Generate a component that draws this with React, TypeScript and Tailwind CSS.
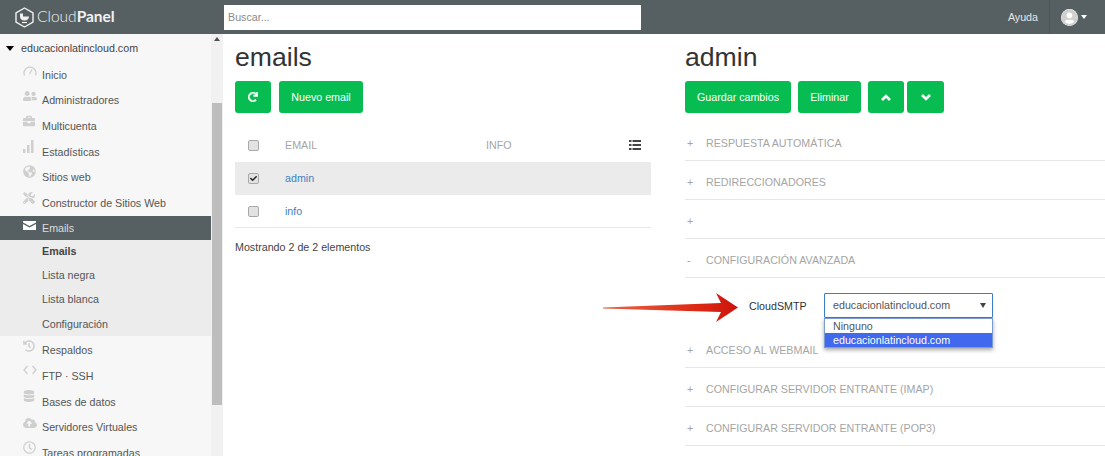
import type { ReactNode } from 'react';
import { FaUserFriends, FaBriefcase, FaGlobeAmericas, FaTools, FaHistory, FaDatabase, FaCloudUploadAlt, FaRegClock, FaRedo, FaUserCircle, FaCheck } from 'react-icons/fa';

function GaugeIcon() {
  return (
    <svg width="14" height="10" viewBox="0 0 14 10" fill="none" stroke="currentColor" strokeWidth="1.3">
      <path d="M1.5 9.5 A6 6 0 1 1 12.5 9.5" />
      <path d="M6.5 8 L9 3.5" />
    </svg>
  );
}

function BarsIcon() {
  return (
    <svg width="11" height="13" viewBox="0 0 11 13" fill="currentColor">
      <rect x="0" y="9" width="2.5" height="4" />
      <rect x="4" y="5" width="2.5" height="8" />
      <rect x="8" y="0" width="2.5" height="13" />
    </svg>
  );
}

function CodeIcon() {
  return (
    <svg width="14" height="10" viewBox="0 0 14 10" fill="none" stroke="currentColor" strokeWidth="1.3">
      <path d="M4.5 1 L1 5 L4.5 9" />
      <path d="M9.5 1 L13 5 L9.5 9" />
    </svg>
  );
}

function MailIcon() {
  return (
    <svg width="13" height="9" viewBox="0 0 13 9" fill="#fff">
      <path d="M0 0 H13 V1.5 L6.5 5 L0 1.5 Z" />
      <path d="M0 3 L6.5 6.5 L13 3 V9 H0 Z" />
    </svg>
  );
}

function ListIcon() {
  return (
    <svg width="12" height="12" viewBox="0 0 12 12" fill="#444">
      <rect x="0" y="1" width="2.5" height="2" />
      <rect x="3.5" y="1" width="8.5" height="2" />
      <rect x="0" y="5" width="2.5" height="2" />
      <rect x="3.5" y="5" width="8.5" height="2" />
      <rect x="0" y="9" width="2.5" height="2" />
      <rect x="3.5" y="9" width="8.5" height="2" />
    </svg>
  );
}

function Chevron({ up }: { up?: boolean }) {
  return (
    <svg width="10" height="7" viewBox="0 0 10 7" fill="none" stroke="#fff" strokeWidth="2.6">
      <path d={up ? 'M1 6 L5 2 L9 6' : 'M1 1 L5 5 L9 1'} />
    </svg>
  );
}

const menuTop = [
  { label: 'Inicio', icon: <GaugeIcon />, top: 'top-[4px]' },
  { label: 'Administradores', icon: <FaUserFriends className="text-[14px]" />, top: 'top-[1px]' },
  { label: 'Multicuenta', icon: <FaBriefcase className="text-[12px]" />, top: 'top-[2px]' },
  { label: 'Estadísticas', icon: <BarsIcon />, top: 'top-[1px]' },
  { label: 'Sitios web', icon: <FaGlobeAmericas className="text-[13px]" />, top: 'top-[1px]' },
  { label: 'Constructor de Sitios Web', icon: <FaTools className="text-[12px]" />, top: 'top-[2px]' },
];

const menuBottom = [
  { label: 'Respaldos', icon: <FaHistory className="text-[12px]" />, top: 'top-[2px]' },
  { label: 'FTP · SSH', icon: <CodeIcon />, top: 'top-[2px]' },
  { label: 'Bases de datos', icon: <FaDatabase className="text-[12px]" />, top: 'top-[1px]' },
  { label: 'Servidores Virtuales', icon: <FaCloudUploadAlt className="text-[14px]" />, top: 'top-[2px]' },
  { label: 'Tareas programadas', icon: <FaRegClock className="text-[13px]" />, top: 'top-[1px]' },
];

function MenuRow({ label, icon, top }: { label: string; icon: ReactNode; top: string }) {
  return (
    <div className="relative flex h-[25.6px] shrink-0 items-center pl-[42px] text-[#555]">
      <span className={`absolute left-[23px] text-[#cfcfcf] ${top}`}>{icon}</span>
      {label}
    </div>
  );
}

function Logo() {
  return (
    <svg width="19" height="21" viewBox="0 0 19 21" fill="none" className="mr-[3px]">
      <path d="M9.5 1 L18 5.8 V15.2 L9.5 20 L1 15.2 V5.8 Z" stroke="#f2f2f2" strokeWidth="1.4" strokeLinejoin="round" />
      <path d="M5 6.5 H8 V9.5 H14 C14 12 12 13.5 9.5 13.5 C7 13.5 5 12 5 9.5 Z" fill="#f2f2f2" />
      <path d="M7 15.5 H12" stroke="#f2f2f2" strokeWidth="1.2" />
    </svg>
  );
}

function Box({ checked }: { checked?: boolean }) {
  return (
    <span className="flex h-[11px] w-[11px] items-center justify-center rounded-[2px] border border-[#a9a9a9] bg-[#e2e2e2]">
      {checked && <FaCheck className="text-[7px] text-[#222]" />}
    </span>
  );
}

function GreenButton({ children, className }: { children: ReactNode; className: string }) {
  return (
    <button className={`flex h-[32px] items-center justify-center rounded-[3px] bg-[#07bd52] text-[10.7px] text-white ${className}`}>
      {children}
    </button>
  );
}

function AccordionRow({ sign, label }: { sign: string; label?: string }) {
  return (
    <div className="flex h-[39px] items-center border-b border-[#e6e6e6] pt-[4px] text-[10.7px] text-[#a5a5a5]">
      <span className="w-[21px] pl-[2px]">{sign}</span>
      {label}
    </div>
  );
}

export default function App() {
  return (
    <div className="flex h-[456px] w-[1105px] flex-col overflow-hidden bg-white font-['Liberation_Sans',Arial,sans-serif]">
      {/* Top bar */}
      <header className="flex h-[34px] shrink-0 items-center bg-[#565f62]">
        <div className="flex w-[224px] items-center pl-[15px] font-['Lato',sans-serif] text-[15.5px] text-[#f2f2f2]">
          <Logo />
          <span className="font-light">Cloud</span>
          <span className="font-bold">Panel</span>
        </div>
        <div className="flex h-[25px] w-[417px] items-center bg-white pl-[4px] text-[10.7px] text-[#8a8a8a]">Buscar...</div>
        <div className="ml-auto flex h-full items-center text-[10.7px] text-[#e6e6e6]">
          <span className="mr-[11px]">Ayuda</span>
          <div className="flex h-full w-[56px] items-center border-l border-[#4d5558] pl-[11px]">
            <span className="flex h-[17px] w-[17px] items-center justify-center overflow-hidden rounded-full bg-white">
              <FaUserCircle className="text-[17px] text-[#d0d0d0]" />
            </span>
            <span className="ml-[3px] h-0 w-0 border-x-[3.5px] border-t-[4px] border-x-transparent border-t-white" />
          </div>
        </div>
      </header>

      <div className="flex min-h-0 flex-1">
        {/* Sidebar */}
        <aside className="flex w-[223px] shrink-0 bg-[#f7f7f7]">
          <nav className="flex w-[211px] shrink-0 flex-col overflow-hidden text-[10.7px]">
            <div className="flex h-[28px] shrink-0 items-center pt-[1px] pl-[6px] text-[#444]">
              <span className="mr-[7px] h-0 w-0 border-x-[4px] border-t-[5px] border-x-transparent border-t-black" />
              educacionlatincloud.com
            </div>
            {menuTop.map((m) => (
              <MenuRow key={m.label} {...m} />
            ))}
            <div className="relative flex h-[24px] shrink-0 items-center bg-[#565f62] pl-[42px] text-[#ddd]">
              <span className="absolute left-[23px] top-[5px]"><MailIcon /></span>
              Emails
            </div>
            <div className="flex h-[96px] shrink-0 flex-col bg-[#ececec] pl-[42px] text-[#555]">
              <div className="flex h-[23px] items-center font-bold text-[#444]">Emails</div>
              <div className="flex h-[24px] items-center">Lista negra</div>
              <div className="flex h-[25px] items-center">Lista blanca</div>
              <div className="flex h-[24px] items-center">Configuración</div>
            </div>
            <div className="h-[2px] shrink-0" />
            {menuBottom.map((m) => (
              <MenuRow key={m.label} {...m} />
            ))}
          </nav>
          {/* Scrollbar */}
          <div className="flex w-[12px] shrink-0 flex-col items-center bg-[#f1f1f1]">
            <span className="mt-[3px] h-0 w-0 border-x-[3px] border-b-[4px] border-x-transparent border-b-[#505050]" />
            <div className="mt-[62px] h-[302px] w-[10px] bg-[#bdbdbd]" />
          </div>
        </aside>

        {/* Email list */}
        <main className="w-[429px] shrink-0 pl-[12px] pr-[1px]">
          <h1 className="mt-[8px] h-[31px] text-[26.6px] leading-[31px] text-[#333]">emails</h1>
          <div className="mt-[8px] flex gap-[8px]">
            <GreenButton className="w-[36px]"><FaRedo className="stroke-white stroke-[30px] text-[10px]" /></GreenButton>
            <GreenButton className="w-[84px]">Nuevo email</GreenButton>
          </div>
          <div className="mt-[15px] flex h-[34px] items-center text-[10.7px] text-[#a5a5a5]">
            <span className="w-[50px] pl-[13px]"><Box /></span>
            <span className="w-[201px]">EMAIL</span>
            <span className="w-[143px]">INFO</span>
            <ListIcon />
          </div>
          <div className="flex h-[33px] items-center bg-[#ebebeb] text-[10.7px] text-[#3f82c4]">
            <span className="w-[50px] pl-[13px]"><Box checked /></span>
            admin
          </div>
          <div className="flex h-[33px] items-center border-b border-[#e6e6e6] text-[10.7px] text-[#3f82c4]">
            <span className="w-[50px] pl-[13px]"><Box /></span>
            info
          </div>
          <p className="mt-[11px] text-[10.7px] text-[#444]">Mostrando 2 de 2 elementos</p>
        </main>

        {/* Detail panel */}
        <section className="relative min-w-0 flex-1 pl-[33px]">
          <h1 className="mt-[8px] h-[31px] text-[26.6px] leading-[31px] text-[#333]">admin</h1>
          <div className="mt-[8px] flex">
            <GreenButton className="mr-[7px] w-[106px]">Guardar cambios</GreenButton>
            <GreenButton className="mr-[7px] w-[63px]">Eliminar</GreenButton>
            <GreenButton className="mr-[3px] w-[36px]"><Chevron up /></GreenButton>
            <GreenButton className="w-[37px]"><Chevron /></GreenButton>
          </div>
          <div className="mt-[9px]">
            <AccordionRow sign="+" label="RESPUESTA AUTOMÁTICA" />
            <AccordionRow sign="+" label="REDIRECCIONADORES" />
            <AccordionRow sign="+" />
            <AccordionRow sign="-" label="CONFIGURACIÓN AVANZADA" />
            <div className="flex h-[51px] items-start pt-[15px] pl-[64px] text-[10.7px] text-[#333]">
              <span className="mt-[5px] w-[75px]">CloudSMTP</span>
              <div className="relative">
                <div className="flex h-[25px] w-[169px] items-center justify-between rounded-[1px] border border-[#3b7dc4] pr-[6px] pl-[8px] text-[#555]">
                  educacionlatincloud.com
                  <span className="h-0 w-0 border-x-[3px] border-t-[5px] border-x-transparent border-t-[#444]" />
                </div>
                {/* Open select menu */}
                <div className="absolute top-[25px] left-0 w-[169px] border border-[#7a9cd0] bg-white shadow-[0_2px_4px_rgba(0,0,0,0.35)]">
                  <div className="h-[14px] pl-[8px] leading-[14px] text-[#555]">Ninguno</div>
                  <div className="h-[14px] bg-[#4069ed] pl-[8px] leading-[14px] text-white">educacionlatincloud.com</div>
                </div>
              </div>
            </div>
            <AccordionRow sign="+" label="ACCESO AL WEBMAIL" />
            <AccordionRow sign="+" label="CONFIGURAR SERVIDOR ENTRANTE (IMAP)" />
            <AccordionRow sign="+" label="CONFIGURAR SERVIDOR ENTRANTE (POP3)" />
          </div>
          {/* Red annotation arrow */}
          <svg width="136" height="32" viewBox="0 0 136 32" className="absolute top-[258px] left-[-49px]">
            <defs>
              <linearGradient id="arrow" x1="0" x2="1" y1="0" y2="0">
                <stop offset="0" stopColor="#e8664a" />
                <stop offset="0.6" stopColor="#e03018" />
                <stop offset="1" stopColor="#cc140c" />
              </linearGradient>
            </defs>
            <path d="M0 15.5 L118 11 L113 1 L135 15.5 L113 30 L118 20 L0 16.5 Z" fill="url(#arrow)" />
          </svg>
        </section>
      </div>
    </div>
  );
}
